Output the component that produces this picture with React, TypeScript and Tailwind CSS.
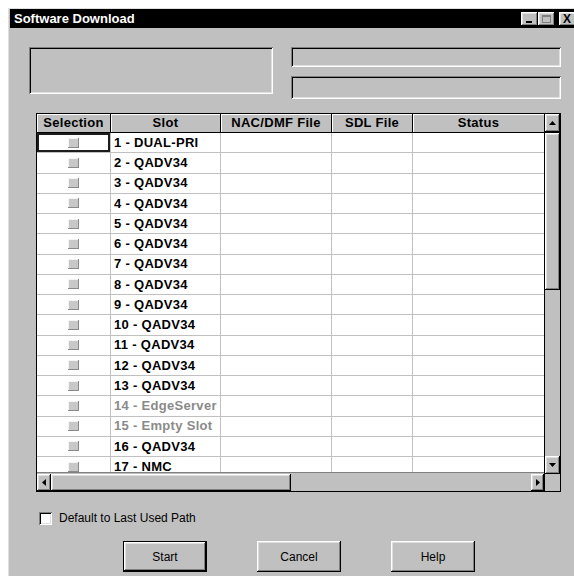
import React from "react";

const raised =
  "shadow-[inset_-1px_-1px_0_#000,inset_1px_1px_0_#fff,inset_-2px_-2px_0_#808080,inset_2px_2px_0_#dfdfdf]";
const sunken =
  "shadow-[inset_1px_1px_0_#808080,inset_-1px_-1px_0_#fff,inset_2px_2px_0_#000,inset_-2px_-2px_0_#dfdfdf]";

const columns = [
  { label: "Selection", w: "w-[74px]" },
  { label: "Slot", w: "w-[110px]" },
  { label: "NAC/DMF File", w: "w-[111px]" },
  { label: "SDL File", w: "w-[81px]" },
  { label: "Status", w: "w-[131px]" },
];

const slots = [
  { name: "1 - DUAL-PRI" },
  { name: "2 - QADV34" },
  { name: "3 - QADV34" },
  { name: "4 - QADV34" },
  { name: "5 - QADV34" },
  { name: "6 - QADV34" },
  { name: "7 - QADV34" },
  { name: "8 - QADV34" },
  { name: "9 - QADV34" },
  { name: "10 - QADV34" },
  { name: "11 - QADV34" },
  { name: "12 - QADV34" },
  { name: "13 - QADV34" },
  { name: "14 - EdgeServer", disabled: true },
  { name: "15 - Empty Slot", disabled: true },
  { name: "16 - QADV34" },
  { name: "17 - NMC" },
];

// little black triangle for scroll arrows
function Arrow({ dir }: { dir: "up" | "down" | "left" | "right" }) {
  const pts = {
    up: "0,4 3.5,0 7,4",
    down: "0,0 3.5,4 7,0",
    left: "4,0 0,3.5 4,7",
    right: "0,0 4,3.5 0,7",
  }[dir];
  const vertical = dir === "up" || dir === "down";
  return (
    <svg width={vertical ? 7 : 4} height={vertical ? 4 : 7}>
      <polygon points={pts} fill="#000" />
    </svg>
  );
}

function TitleButton({ children, className = "" }: { children?: React.ReactNode; className?: string }) {
  return (
    <div className={`w-[17px] h-[14px] bg-[#c0c0c0] flex items-center justify-center ${raised} ${className}`}>
      {children}
    </div>
  );
}

function SlotRow({ name, disabled, first }: { name: string; disabled?: boolean; first?: boolean }) {
  return (
    <div className="flex h-[20.25px] shrink-0">
      <div
        className={`w-[74px] bg-white border-r border-b border-[#c0c0c0] flex items-center justify-center ${
          first ? "shadow-[inset_0_0_0_2px_#1c1c1c]" : ""
        }`}
      >
        <div className="w-[11px] h-[10px] bg-[#c8c8c8] shadow-[inset_-1px_-1px_0_#8a8a8a,inset_1px_1px_0_#f4f4f4]" />
      </div>
      <div
        className={`w-[110px] bg-white border-r border-b border-[#c0c0c0] pl-[3px] flex items-center font-bold text-[13px] tracking-[0.3px] whitespace-nowrap overflow-hidden ${
          disabled ? "text-[#8a8a8a]" : "text-black"
        }`}
      >
        {name}
      </div>
      <div className="w-[111px] bg-white border-r border-b border-[#c0c0c0]" />
      <div className="w-[81px] bg-white border-r border-b border-[#c0c0c0]" />
      <div className="w-[131px] bg-white border-b border-[#c0c0c0]" />
    </div>
  );
}

function PushButton({ label, primary }: { label: string; primary?: boolean }) {
  return (
    <div
      className={`w-[84px] h-[31px] bg-[#c0c0c0] flex items-center justify-center text-[12px] text-black ${
        primary ? "border border-black" : ""
      } ${raised}`}
    >
      {label}
    </div>
  );
}

export default function App() {
  return (
    <div
      className="w-[574px] h-[576px] overflow-hidden bg-white pt-[8px] pl-[8px]"
      style={{ fontFamily: '"Liberation Sans", Arial, sans-serif' }}
    >
      <div className="w-[600px] h-[600px] bg-[#c0c0c0] border-l border-t border-[#dfdfdf] pl-[1px]">
        {/* Title bar */}
        <div className="h-[19px] bg-black flex items-center pl-[4px] pr-[2px]">
          <span className="text-white font-bold text-[13px] leading-none">Software Download</span>
          <div className="ml-[386px] flex items-center">
            <TitleButton>
              <div className="w-[6px] h-[2px] bg-black mt-[6px]" />
            </TitleButton>
            <TitleButton>
              <div className="w-[9px] h-[8px] border border-[#808080] border-t-2" />
            </TitleButton>
            <TitleButton className="ml-[4px]">
              <span className="text-[12px] font-bold leading-none">X</span>
            </TitleButton>
          </div>
        </div>

        <div className="pl-[19px]">
          {/* Info panels */}
          <div className="flex mt-[19px]">
            <div className={`w-[244px] h-[47px] ${sunken}`} />
            <div className="ml-[18px] flex flex-col gap-[9px]">
              <div className={`w-[270px] h-[20px] ${sunken}`} />
              <div className={`w-[270px] h-[23px] ${sunken}`} />
            </div>
          </div>

          {/* Slot table */}
          <div className="ml-[7px] mt-[14px] w-[525px] border border-black bg-[#c0c0c0] flex flex-col">
            <div className="flex">
              <div className="flex flex-col">
                <div className="flex h-[19px] border-b border-black">
                  {columns.map((c, i) => (
                    <div
                      key={c.label}
                      className={`${c.w} ${
                        i < columns.length - 1 ? "border-r border-black" : ""
                      } bg-[#c0c0c0] shadow-[inset_1px_1px_0_#fff] flex items-center justify-center font-bold text-[13px] tracking-[0.3px] text-black`}
                    >
                      {c.label}
                    </div>
                  ))}
                </div>
                <div className="h-[340px] overflow-hidden flex flex-col border-b border-[#808080]">
                  {slots.map((s, i) => (
                    <SlotRow key={s.name} name={s.name} disabled={s.disabled} first={i === 0} />
                  ))}
                </div>
              </div>

              {/* Vertical scrollbar */}
              <div className="w-[16px] flex flex-col border-l border-black">
                <div className={`h-[19px] flex items-center justify-center bg-[#c0c0c0] border-b border-black ${raised}`}>
                  <Arrow dir="up" />
                </div>
                <div className={`h-[157px] bg-[#c0c0c0] ${raised}`} />
                <div className="h-[166px] bg-[#c0c0c0]" />
                <div className={`h-[18px] flex items-center justify-center bg-[#c0c0c0] ${raised}`}>
                  <Arrow dir="down" />
                </div>
              </div>
            </div>

            {/* Horizontal scrollbar */}
            <div className="flex h-[17px]">
              <div className={`w-[14px] flex items-center justify-center ${raised}`}>
                <Arrow dir="left" />
              </div>
              <div className={`w-[240px] ${raised}`} />
              <div className="w-[240px]" />
              <div className={`w-[13px] flex items-center justify-center ${raised}`}>
                <Arrow dir="right" />
              </div>
              <div className="w-[16px] border-l border-black" />
            </div>
          </div>

          {/* Option */}
          <div className="ml-[10px] mt-[17px] flex items-center">
            <div className={`w-[13px] h-[13px] bg-white ${sunken}`} />
            <span className="ml-[7px] text-[12px] text-black">Default to Last Used Path</span>
          </div>

          {/* Actions */}
          <div className="mt-[14px] ml-[94px] flex gap-[50px]">
            <PushButton label="Start" primary />
            <PushButton label="Cancel" />
            <PushButton label="Help" />
          </div>
        </div>
      </div>
    </div>
  );
}
